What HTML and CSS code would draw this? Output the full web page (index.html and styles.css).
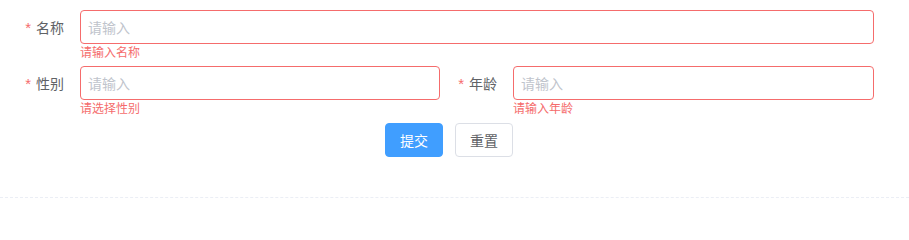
FILE: index.html
```html
<!DOCTYPE html>
<html lang="zh">
<head>
<meta charset="utf-8">
<link rel="stylesheet" href="styles.css">
</head>
<body>
<div class="panel">
  <form class="form">
    <div class="row row-single">
      <label class="label"><span class="req">*</span>名称</label>
      <div class="field">
        <input class="input is-error" placeholder="请输入">
        <div class="error">请输入名称</div>
      </div>
    </div>
    <div class="row row-double">
      <label class="label"><span class="req">*</span>性别</label>
      <div class="field">
        <input class="input is-error" placeholder="请输入">
        <div class="error">请选择性别</div>
      </div>
      <label class="label"><span class="req">*</span>年龄</label>
      <div class="field">
        <input class="input is-error" placeholder="请输入">
        <div class="error">请输入年龄</div>
      </div>
    </div>
    <div class="actions">
      <button type="button" class="btn btn-primary">提交</button>
      <button type="button" class="btn btn-default">重置</button>
    </div>
  </form>
</div>
</body>
</html>
```

FILE: styles.css
```css
* { box-sizing: border-box; }
html, body {
  margin: 0;
  padding: 0;
  background: #fff;
}
body {
  font-family: "Noto Sans CJK SC", "Noto Sans", "Liberation Sans", sans-serif;
  font-size: 14px;
  color: #606266;
  width: 909px;
  height: 202px;
  overflow: hidden;
}
.panel {
  padding-top: 10px;
  padding-bottom: 40px;
  border-bottom: 1px dashed #ebeef5;
}
.form {
  width: 874px;
  margin: 0;
}
.row {
  display: grid;
  align-items: start;
}
.row-single {
  grid-template-columns: 80px 1fr;
}
.row-double {
  grid-template-columns: 80px 360px 73px 1fr;
}
.label {
  height: 34px;
  line-height: 34px;
  text-align: right;
  padding-right: 16px;
  font-size: 14px;
  color: #606266;
  white-space: nowrap;
}
.req {
  color: #f56c6c;
  font-family: "Liberation Sans", sans-serif;
  font-size: 15px;
  margin-right: 5px;
}
.field {
  display: flex;
  flex-direction: column;
}
.input {
  display: block;
  width: 100%;
  height: 34px;
  padding: 0 7px;
  border: 1px solid #dcdfe6;
  border-radius: 4px;
  font-family: inherit;
  font-size: 14px;
  color: #606266;
  outline: none;
  background: #fff;
}
.input::placeholder {
  color: #c0c4cc;
}
.input.is-error {
  border-color: #f56c6c;
}
.error {
  height: 22px;
  padding-top: 2px;
  font-size: 12px;
  line-height: 12px;
  color: #f56c6c;
}
.actions {
  display: flex;
  justify-content: center;
  gap: 12px;
  width: 898px;
  padding-top: 1px;
}
.btn {
  height: 34px;
  width: 58px;
  padding: 0;
  border-radius: 4px;
  font-family: inherit;
  font-size: 14px;
  cursor: pointer;
}
.btn-primary {
  background: #409eff;
  border: 1px solid #409eff;
  color: #fff;
}
.btn-default {
  background: #fff;
  border: 1px solid #dcdfe6;
  color: #606266;
}
```
